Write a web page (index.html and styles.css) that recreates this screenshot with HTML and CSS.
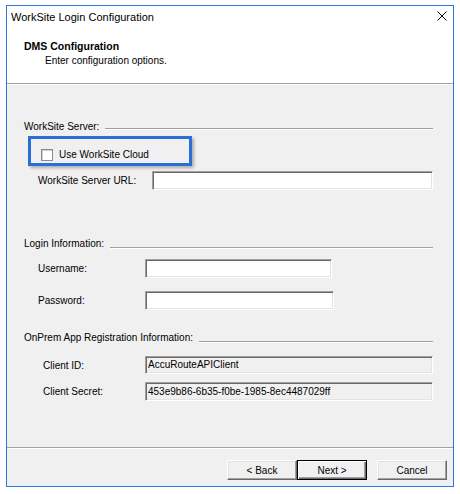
FILE: index.html
```html
<!DOCTYPE html>
<html>
<head>
<meta charset="utf-8">
<link rel="stylesheet" href="styles.css">
</head>
<body>
<div class="window">
  <div class="titlebar">
    <span class="title">WorkSite Login Configuration</span>
    <svg class="close" width="10" height="10" viewBox="0 0 10 10"><path d="M0.5 0.5 L9.5 9.5 M9.5 0.5 L0.5 9.5" stroke="#000" stroke-width="1" fill="none"/></svg>
  </div>
  <div class="header">
    <div class="h-title">DMS Configuration</div>
    <div class="h-sub">Enter configuration options.</div>
  </div>
  <div class="content">
    <div class="group g-server">
      <span class="g-label">WorkSite Server:</span><span class="rule"></span>
    </div>
    <div class="highlight">
      <span class="checkbox"></span><span class="cb-label">Use WorkSite Cloud</span>
    </div>
    <div class="row r-url">
      <span class="label l-url">WorkSite Server URL:</span><span class="input w-url"></span>
    </div>

    <div class="group g-login">
      <span class="g-label">Login Information:</span><span class="rule"></span>
    </div>
    <div class="row r-user">
      <span class="label l-login">Username:</span><span class="input w-user"></span>
    </div>
    <div class="row r-pass">
      <span class="label l-login">Password:</span><span class="input w-pass"></span>
    </div>

    <div class="group g-onprem">
      <span class="g-label">OnPrem App Registration Information:</span><span class="rule"></span>
    </div>
    <div class="row r-cid indent2">
      <span class="label l-client">Client ID:</span><span class="input ro w-client h18">AccuRouteAPIClient</span>
    </div>
    <div class="row r-csec indent2">
      <span class="label l-client">Client Secret:</span><span class="input ro w-client">453e9b86-6b35-f0be-1985-8ec4487029ff</span>
    </div>
  </div>
  <div class="footer">
    <button class="btn">&lt; Back</button>
    <button class="btn default">Next &gt;</button>
    <button class="btn cancel">Cancel</button>
  </div>
</div>
</body>
</html>
```

FILE: styles.css
```css
html, body {
  margin: 0;
  padding: 0;
  background: #ffffff;
}
body {
  font-family: "Liberation Sans", Arial, sans-serif;
  font-size: 10px;
  color: #000;
}
.window {
  margin: 5px 0 0 6px;
  width: 446px;
  height: 480px;
  border: 1px solid #2b7ad8;
  display: flex;
  flex-direction: column;
  background: #f0f0f0;
}
.titlebar {
  height: 22px;
  background: #fff;
  display: flex;
  align-items: center;
  justify-content: space-between;
  padding: 0 6px 0 4px;
}
.title {
  font-size: 11px;
  line-height: 22px;
}
.close {
  display: block;
  margin-top: -3px;
}
.header {
  height: 56px;
  box-sizing: border-box;
  background: #fff;
  padding: 12px 0 0 17px;
  border-bottom: 1px solid #a0a0a0;
  box-shadow: 0 1px 0 #ffffff;
}
.h-title {
  font-weight: bold;
  font-size: 10.5px;
  line-height: 13px;
}
.h-sub {
  line-height: 13px;
  margin: 1px 0 0 21px;
}
.content {
  margin-top: 1px;
  height: 360px;
  box-sizing: border-box;
  padding: 35px 20px 0 17px;
}
.group {
  display: flex;
  align-items: flex-start;
  height: 13px;
  line-height: 13px;
}
.g-label {
  white-space: nowrap;
}
.rule {
  flex: 1;
  height: 1px;
  background: #a0a0a0;
  box-shadow: 0 1px 0 #ffffff;
  margin: 8px 0 0 6px;
}
.g-login { margin-top: 47px; }
.g-login .rule { margin-top: 10px; }
.g-onprem { margin-top: 21px; }
.g-onprem .rule { margin-top: 10px; }

.highlight {
  margin: 3px 0 0 4px;
  width: 148px;
  height: 24px;
  border: 3px solid #2a6fd5;
  box-shadow: 2px 2px 3px rgba(0, 0, 0, 0.28);
  display: flex;
  align-items: flex-start;
  padding: 0 0 0 10px;
}
.checkbox {
  width: 10px;
  height: 10px;
  margin-top: 10px;
  border: 1px solid #8a8a8a;
  background: #fff;
  box-shadow: inset 1px 1px 0 #d0d0d0;
}
.cb-label {
  margin: 9px 0 0 6px;
  line-height: 13px;
  white-space: nowrap;
}
.row {
  display: flex;
  align-items: center;
  padding-left: 14px;
}
.indent2 { padding-left: 19px; }
.label {
  white-space: nowrap;
  flex: none;
}
.l-url { width: 114px; }
.l-login { width: 107px; }
.l-client { width: 102px; }
.input {
  display: block;
  box-sizing: border-box;
  height: 19px;
  background: #fff;
  border-style: solid;
  border-width: 1px;
  border-color: #a0a0a0 #ffffff #ffffff #a0a0a0;
  box-shadow: inset 1px 1px 0 #696969, inset -1px -1px 0 #e3e3e3;
  line-height: 17px;
  padding-left: 2px;
  white-space: nowrap;
  overflow: hidden;
}
.input.ro { background: #f0f0f0; }
.h18 { height: 18px; line-height: 16px; }
.r-url { margin-top: 5px; }
.w-url { width: 282px; }
.r-user { margin-top: 9px; }
.w-user { width: 187px; }
.r-pass { margin-top: 13px; }
.w-pass { width: 189px; }
.r-cid { margin-top: 12px; }
.r-csec { margin-top: 8px; }
.w-client { width: 289px; }

.footer {
  margin-top: 2px;
  border-top: 1px solid #a0a0a0;
  box-shadow: inset 0 1px 0 #ffffff;
  flex: 1;
  display: flex;
  justify-content: flex-end;
  align-items: flex-start;
  padding: 12px 6px 0 0;
}
.btn {
  font-family: "Liberation Sans", Arial, sans-serif;
  font-size: 10px;
  color: #000;
  width: 70px;
  height: 20px;
  margin: 0;
  padding: 0;
  background: #f0f0f0;
  border: 1px solid;
  border-color: #ffffff #696969 #696969 #ffffff;
  box-shadow: inset -1px -1px 0 #a0a0a0, inset 1px 1px 0 #e3e3e3;
}
.btn.default {
  border-color: #000;
  box-shadow: inset 1px 1px 0 #ffffff, inset -1px -1px 0 #696969, inset -2px -2px 0 #a0a0a0;
}
.btn.cancel { margin-left: 10px; }
```
